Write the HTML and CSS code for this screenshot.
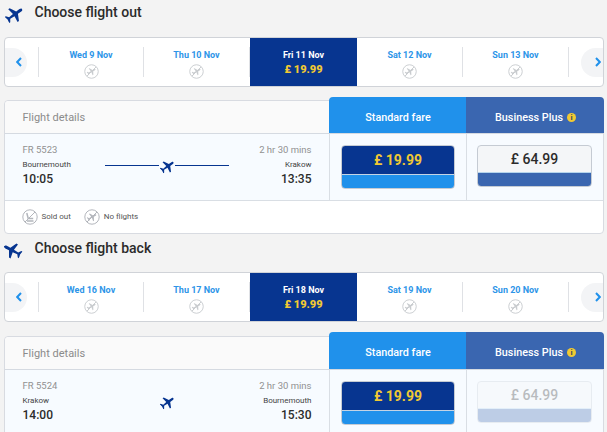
FILE: index.html
```html
<!DOCTYPE html>
<html lang="en">
<head>
    <meta charset="UTF-8">
    <meta name="viewport" content="width=device-width, initial-scale=1.0">
    <title>Choose flights</title>
    <link rel="stylesheet" href="styles.css">
</head>
<body>
    <svg class="sprite">
        <symbol id="plane" viewBox="0 0 24 24">
            <path d="M22 14.500v-2.200L13.900 8V2.800C13.900 1.200 12.900 0 12 0S10.100 1.200 10.100 2.800V8L2 12.300v2.200l8.300-1.300.5 6.300-3.600 2.600v1.700l4.800-1 4.800 1v-1.700l-3.600-2.600.5-6.300z"/>
        </symbol>
        <symbol id="no-flights" viewBox="0 0 16 16">
            <circle cx="8" cy="8" r="7.2" fill="none" stroke="currentColor"/>
            <path d="M13 3L3 13" stroke="currentColor"/>
            <use href="#plane" x="3" y="3" width="10" height="10" transform="rotate(60 8 8)"/>
        </symbol>
        <symbol id="sold-out" viewBox="0 0 16 16">
            <circle cx="8" cy="8" r="7.2" fill="none" stroke="currentColor"/>
            <path d="M13 3L3 13" stroke="currentColor"/>
            <path d="M4.8 4l1.4 5.500h5M5 12h6.500" fill="none" stroke="currentColor" stroke-width="1.5"/>
        </symbol>
    </svg>

    <section class="trip">
        <h2 class="trip-title"><svg class="title-icon out"><use href="#plane"/></svg>Choose flight out</h2>

        <div class="dates">
            <button class="arrow prev"><svg viewBox="0 0 6 10"><path d="M5 1L1.2 5 5 9"/></svg></button>
            <div class="date first"><span>Wed 9 Nov</span><svg><use href="#no-flights"/></svg></div>
            <div class="date"><span>Thu 10 Nov</span><svg><use href="#no-flights"/></svg></div>
            <div class="date active"><span>Fri 11 Nov</span><b>£ 19.99</b></div>
            <div class="date"><span>Sat 12 Nov</span><svg><use href="#no-flights"/></svg></div>
            <div class="date"><span>Sun 13 Nov</span><svg><use href="#no-flights"/></svg></div>
            <button class="arrow next"><svg viewBox="0 0 6 10"><path d="M1 1l3.8 4L1 9"/></svg></button>
        </div>

        <div class="flights">
            <div class="head">
                <div class="head-details">Flight details</div>
                <div class="head-fare standard">Standard fare</div>
                <div class="head-fare business">Business Plus <i class="info">i</i></div>
            </div>
            <div class="row">
                <div class="details">
                    <div class="place">
                        <span class="meta">FR 5523</span>
                        <span class="city">Bournemouth</span>
                        <span class="time">10:05</span>
                    </div>
                    <div class="route line"><svg><use href="#plane"/></svg></div>
                    <div class="place arrival">
                        <span class="meta">2 hr 30 mins</span>
                        <span class="city">Krakow</span>
                        <span class="time">13:35</span>
                    </div>
                </div>
                <div class="fare"><button class="price standard-price">£ 19.99</button></div>
                <div class="fare"><button class="price business-price">£ 64.99</button></div>
            </div>
            <div class="legend">
                <svg><use href="#sold-out"/></svg><span>Sold out</span>
                <svg><use href="#no-flights"/></svg><span>No flights</span>
            </div>
        </div>
    </section>

    <section class="trip return">
        <h2 class="trip-title"><svg class="title-icon back"><use href="#plane"/></svg>Choose flight back</h2>

        <div class="dates">
            <button class="arrow prev"><svg viewBox="0 0 6 10"><path d="M5 1L1.2 5 5 9"/></svg></button>
            <div class="date first"><span>Wed 16 Nov</span><svg><use href="#no-flights"/></svg></div>
            <div class="date"><span>Thu 17 Nov</span><svg><use href="#no-flights"/></svg></div>
            <div class="date active"><span>Fri 18 Nov</span><b>£ 19.99</b></div>
            <div class="date"><span>Sat 19 Nov</span><svg><use href="#no-flights"/></svg></div>
            <div class="date"><span>Sun 20 Nov</span><svg><use href="#no-flights"/></svg></div>
            <button class="arrow next"><svg viewBox="0 0 6 10"><path d="M1 1l3.8 4L1 9"/></svg></button>
        </div>

        <div class="flights">
            <div class="head">
                <div class="head-details">Flight details</div>
                <div class="head-fare standard">Standard fare</div>
                <div class="head-fare business">Business Plus <i class="info">i</i></div>
            </div>
            <div class="row">
                <div class="details">
                    <div class="place">
                        <span class="meta">FR 5524</span>
                        <span class="city">Krakow</span>
                        <span class="time">14:00</span>
                    </div>
                    <div class="route"><svg><use href="#plane"/></svg></div>
                    <div class="place arrival">
                        <span class="meta">2 hr 30 mins</span>
                        <span class="city">Bournemouth</span>
                        <span class="time">15:30</span>
                    </div>
                </div>
                <div class="fare"><button class="price standard-price">£ 19.99</button></div>
                <div class="fare"><button class="price business-price" disabled>£ 64.99</button></div>
            </div>
        </div>
    </section>
</body>
</html>
```
FILE: styles.css
```css
* {
    box-sizing: border-box;
}
body {
    margin: 0;
    height: 432px;
    overflow: hidden;
    background: #f3f3f3;
    color: #2b2b2b;
    font-family: Roboto, Arial, sans-serif;
}
button {
    border: 0;
    padding: 0;
    font-family: inherit;
}
.sprite {
    display: none;
}
.trip {
    width: 604px;
    padding-left: 4px;
}
.trip-title {
    display: flex;
    align-items: center;
    height: 24px;
    margin: 0 0 13px;
    font-size: 14px;
    font-weight: 500;
}
.return {
    height: 198px;
    overflow: hidden;
}
.return .trip-title {
    height: 28px;
    margin-bottom: 10px;
}
.title-icon {
    flex: none;
    width: 19px;
    height: 19px;
    margin: 4px 10.5px 0 1px;
    fill: #073590;
}
.title-icon.out {
    transform: rotate(54deg);
}
.title-icon.back {
    margin: 5px 12.5px 0 -1px;
    transform: rotate(-62deg);
}

/* date carousel */
.dates {
    display: flex;
    align-items: center;
    height: 50px;
    border: 1px solid #d0d3d8;
    border-radius: 4px;
    background: #fff;
    overflow: hidden;
}
.arrow {
    flex: none;
    height: 29px;
    background: #f3f4f6;
}
.arrow svg {
    display: block;
    width: 6px;
    height: 10px;
    fill: none;
    stroke: #2091eb;
    stroke-width: 2;
}
.prev {
    width: 22px;
    margin-right: 11px;
    padding-left: 11px;
    border-radius: 0 15px 15px 0;
}
.next {
    width: 22px;
    margin-left: auto;
    padding-left: 14px;
    border-radius: 15px 0 0 15px;
}
.date {
    display: flex;
    flex-direction: column;
    align-items: center;
    width: 106px;
    height: 30px;
    padding-top: 2px;
    border-right: 1px solid #dfe1e5;
    color: #2d95e8;
    font-size: 9px;
    font-weight: 700;
    line-height: 12px;
}
.date.first {
    border-left: 1px solid #dfe1e5;
}
.date svg {
    flex: none;
    width: 15px;
    height: 15px;
    margin-top: 3px;
    color: #c9cccf;
    fill: #c9cccf;
}
.date.active {
    width: 107px;
    height: 48px;
    padding-top: 11px;
    border: 0;
    background: #073590;
    color: #fff;
}
.date b {
    margin-top: 3px;
    color: #f1c933;
    font-size: 11px;
}

/* flight table */
.flights {
    height: 134px;
    margin-top: 13px;
    border: 1px solid #d8dbe1;
    border-radius: 4px;
    background: #fff;
}
.return .flights {
    margin-top: 14px;
}
.head {
    display: flex;
    height: 33px;
    border-bottom: 1px solid #d5dae1;
    border-radius: 4px 4px 0 0;
    background: #fafafa;
}
.head-details {
    width: 324px;
    padding-left: 17.5px;
    color: #8b8b8b;
    font-size: 11px;
    line-height: 33px;
}
.head-fare {
    display: flex;
    align-items: center;
    justify-content: center;
    width: 137px;
    height: 36px;
    margin-top: -4px;
    padding: 4px 0 0 1px;
    color: #fff;
    font-size: 10.8px;
    font-weight: 500;
}
.return .head-fare {
    height: 37px;
    margin-top: -5px;
}
.standard {
    border-radius: 4px 0 0 0;
    background: #2091eb;
}
.business {
    width: 138px;
    margin-right: -1px;
    border-radius: 0 4px 0 0;
    background: #3a66b0;
}
.info {
    width: 9px;
    height: 9px;
    margin-left: 4px;
    border-radius: 50%;
    background: #f1c933;
    color: #3a4a5c;
    font-size: 8px;
    font-style: normal;
    font-weight: 700;
    line-height: 9px;
    text-align: center;
}
.row {
    display: flex;
    height: 67px;
    border-bottom: 1px solid #d9dee4;
    background: #f7fbff;
}
.details {
    display: flex;
    justify-content: space-between;
    width: 324px;
    padding: 8px 17.5px 0;
}
.place {
    display: flex;
    flex-direction: column;
    width: 76px;
}
.arrival {
    align-items: flex-end;
}
.meta {
    color: #919191;
    font-size: 9.5px;
    line-height: 16px;
}
.city {
    color: #444;
    font-size: 8px;
    line-height: 13px;
}
.time {
    font-size: 12px;
    font-weight: 500;
    line-height: 17px;
}
.route {
    display: flex;
    align-items: center;
    justify-content: center;
    width: 124px;
    height: 14px;
    margin-top: 16px;
}
.route svg {
    width: 15px;
    height: 15px;
    margin: 2px 0 0 1px;
    fill: #073590;
    transform: rotate(54deg);
}
.line::before,
.line::after {
    content: "";
    flex: 1;
    height: 1px;
    background: #073590;
}
.fare {
    width: 137px;
    padding: 11px 0 0 11px;
    border-left: 1px solid #d9dee4;
}
.price {
    display: block;
    width: 114px;
    height: 44px;
    padding-bottom: 14px;
    border: 1px solid #c5cbd3;
    border-radius: 4px;
    font-size: 14px;
    font-weight: 700;
}
.standard-price {
    background: linear-gradient(#073590 28px, #c4d4e4 28px, #c4d4e4 29px, #2091eb 29px);
    color: #f1c933;
}
.business-price {
    width: 115px;
    height: 42px;
    margin-left: -1px;
    padding-bottom: 15px;
    background: linear-gradient(#f4f6f8 26px, #b6d5ec 26px, #b6d5ec 27px, #3a66b0 27px);
    color: #2b2b2b;
    font-size: 14px;
    font-weight: 500;
}
.business-price:disabled {
    opacity: 0.3;
}
.legend {
    display: flex;
    align-items: center;
    height: 31px;
    padding-left: 16.5px;
    color: #555;
    font-size: 8px;
}
.legend svg {
    width: 16px;
    height: 16px;
    margin-right: 4px;
    color: #b3b6bc;
    fill: #b3b6bc;
}
.legend span {
    margin-right: 13px;
}
```
